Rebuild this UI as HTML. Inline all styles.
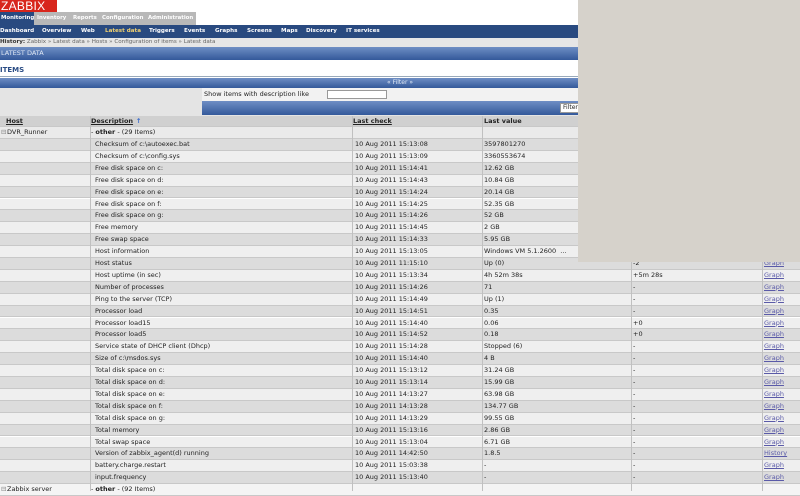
<!DOCTYPE html>
<html><head><meta charset="utf-8"><style>
*{margin:0;padding:0;box-sizing:border-box}
body{width:800px;height:491px;overflow:hidden;background:#fff;font-family:"DejaVu Sans","Liberation Sans",sans-serif;font-size:6.5px;color:#222;position:relative}
.a{position:absolute}
.logo{left:0;top:0;width:57px;height:12px;background:#d8261c;color:#fff;font-family:"Liberation Sans",sans-serif;font-size:12px;line-height:12px;padding-left:1px;letter-spacing:.3px}
.mm{left:0;top:12px;width:196px;height:13px;background:#b8b8b8;color:#fff;font-weight:bold;line-height:13px;font-size:5.4px}
.mm span{position:absolute;top:0}
.sub{left:0;top:25px;width:800px;height:13px;background:#294a80;color:#fff;font-weight:bold;line-height:13px;font-size:5.6px}
.sub span{position:absolute;top:0}
.hist{left:0;top:38px;width:800px;height:9px;background:#e6e6e6;line-height:9px;color:#666;font-size:5.6px}
.bar{background:linear-gradient(#6e8ec4,#34599a);color:#dfe8f5}
.row{position:absolute;left:0;width:800px;height:11.9px;line-height:11.9px;border-bottom:1px solid #c8c8c8}
.row span{position:absolute;top:0}
.d{background:#dcdcdc}.l{background:#efefef}
.c1{left:95px}.c2{left:355px}.c3{left:484px}.c4{left:633px}.c5{left:764px;color:#5a5aa8;text-decoration:underline}
.vl{position:absolute;top:116px;height:375px;width:1px;background:#c0c0c0}
</style></head><body>
<div class="a logo">ZABBIX</div>
<div class="a mm"><span style="left:0;width:34px;height:13px;background:#294a80;padding-left:1px">Monitoring</span><span style="left:37px">Inventory</span><span style="left:73px">Reports</span><span style="left:102px">Configuration</span><span style="left:148px">Administration</span></div>
<div class="a sub"><span style="left:0">Dashboard</span><span style="left:42px">Overview</span><span style="left:81px">Web</span><span style="left:105px;color:#f0d070">Latest data</span><span style="left:149px">Triggers</span><span style="left:184px">Events</span><span style="left:215px">Graphs</span><span style="left:247px">Screens</span><span style="left:281px">Maps</span><span style="left:306px">Discovery</span><span style="left:346px">IT services</span></div>
<div class="a hist"><b style="color:#333">History:</b> Zabbix » Latest data » Hosts » Configuration of items » Latest data</div>
<div class="a bar" style="left:0;top:47px;width:800px;height:13px;line-height:13px;padding-left:1px">LATEST DATA</div>
<div class="a" style="left:0;top:60px;width:800px;height:17px;line-height:20px;font-weight:bold;color:#2a4c84;font-size:7px;border-bottom:1px solid #9ab">ITEMS</div>
<div class="a bar" style="left:0;top:78px;width:800px;height:10px;line-height:10px;text-align:center;font-size:6px">« Filter »</div>
<div class="a" style="left:0;top:88px;width:800px;height:28px;background:#e4e4e4"></div>
<div class="a" style="left:202px;top:88px;width:376px;height:13px;background:#f2f2f2;line-height:13px;padding-left:2px">Show items with description like</div>
<div class="a" style="left:327px;top:90px;width:60px;height:9px;background:#fff;border:1px solid #999"></div>
<div class="a bar" style="left:202px;top:101px;width:376px;height:14px"></div>
<div class="a" style="left:560px;top:103px;width:22px;height:10px;background:#fff;border:1px solid #999;line-height:8px;font-size:6px;padding-left:2px">Filter</div>
<div class="row" style="top:116px;background:#d0d0d0;font-weight:bold;height:11px;line-height:11px"><span style="left:6px;text-decoration:underline">Host</span><span class="c1" style="left:91px;text-decoration:underline">Description</span><span style="left:136px;color:#36c">↑</span><span class="c2" style="left:353px;text-decoration:underline">Last check</span><span class="c3">Last value</span></div>
<div class="row" style="top:127px;background:#eaeaea"><span style="left:1px;color:#888">⊟</span><span style="left:7px">DVR_Runner</span><span style="left:91px">- <b>other</b> - (29 Items)</span></div>
<div class="row d" style="top:139px"><span class="c1">Checksum of c:\autoexec.bat</span><span class="c2">10 Aug 2011 15:13:08</span><span class="c3">3597801270</span></div>
<div class="row l" style="top:150.9px"><span class="c1">Checksum of c:\config.sys</span><span class="c2">10 Aug 2011 15:13:09</span><span class="c3">3360553674</span></div>
<div class="row d" style="top:162.8px"><span class="c1">Free disk space on c:</span><span class="c2">10 Aug 2011 15:14:41</span><span class="c3">12.62 GB</span></div>
<div class="row l" style="top:174.7px"><span class="c1">Free disk space on d:</span><span class="c2">10 Aug 2011 15:14:43</span><span class="c3">10.84 GB</span></div>
<div class="row d" style="top:186.6px"><span class="c1">Free disk space on e:</span><span class="c2">10 Aug 2011 15:14:24</span><span class="c3">20.14 GB</span></div>
<div class="row l" style="top:198.5px"><span class="c1">Free disk space on f:</span><span class="c2">10 Aug 2011 15:14:25</span><span class="c3">52.35 GB</span></div>
<div class="row d" style="top:210.4px"><span class="c1">Free disk space on g:</span><span class="c2">10 Aug 2011 15:14:26</span><span class="c3">52 GB</span></div>
<div class="row l" style="top:222.3px"><span class="c1">Free memory</span><span class="c2">10 Aug 2011 15:14:45</span><span class="c3">2 GB</span></div>
<div class="row d" style="top:234.2px"><span class="c1">Free swap space</span><span class="c2">10 Aug 2011 15:14:33</span><span class="c3">5.95 GB</span></div>
<div class="row l" style="top:246.1px"><span class="c1">Host information</span><span class="c2">10 Aug 2011 15:13:05</span><span class="c3">Windows VM 5.1.2600 &nbsp;...</span></div>
<div class="row d" style="top:258px"><span class="c1">Host status</span><span class="c2">10 Aug 2011 11:15:10</span><span class="c3">Up (0)</span><span class="c4">-2</span><span class="c5">Graph</span></div>
<div class="row l" style="top:269.9px"><span class="c1">Host uptime (in sec)</span><span class="c2">10 Aug 2011 15:13:34</span><span class="c3">4h 52m 38s</span><span class="c4">+5m 28s</span><span class="c5">Graph</span></div>
<div class="row d" style="top:281.8px"><span class="c1">Number of processes</span><span class="c2">10 Aug 2011 15:14:26</span><span class="c3">71</span><span class="c4">-</span><span class="c5">Graph</span></div>
<div class="row l" style="top:293.7px"><span class="c1">Ping to the server (TCP)</span><span class="c2">10 Aug 2011 15:14:49</span><span class="c3">Up (1)</span><span class="c4">-</span><span class="c5">Graph</span></div>
<div class="row d" style="top:305.6px"><span class="c1">Processor load</span><span class="c2">10 Aug 2011 15:14:51</span><span class="c3">0.35</span><span class="c4">-</span><span class="c5">Graph</span></div>
<div class="row l" style="top:317.5px"><span class="c1">Processor load15</span><span class="c2">10 Aug 2011 15:14:40</span><span class="c3">0.06</span><span class="c4">+0</span><span class="c5">Graph</span></div>
<div class="row d" style="top:329.4px"><span class="c1">Processor load5</span><span class="c2">10 Aug 2011 15:14:52</span><span class="c3">0.18</span><span class="c4">+0</span><span class="c5">Graph</span></div>
<div class="row l" style="top:341.3px"><span class="c1">Service state of DHCP client (Dhcp)</span><span class="c2">10 Aug 2011 15:14:28</span><span class="c3">Stopped (6)</span><span class="c4">-</span><span class="c5">Graph</span></div>
<div class="row d" style="top:353.2px"><span class="c1">Size of c:\msdos.sys</span><span class="c2">10 Aug 2011 15:14:40</span><span class="c3">4 B</span><span class="c4">-</span><span class="c5">Graph</span></div>
<div class="row l" style="top:365.1px"><span class="c1">Total disk space on c:</span><span class="c2">10 Aug 2011 15:13:12</span><span class="c3">31.24 GB</span><span class="c4">-</span><span class="c5">Graph</span></div>
<div class="row d" style="top:377px"><span class="c1">Total disk space on d:</span><span class="c2">10 Aug 2011 15:13:14</span><span class="c3">15.99 GB</span><span class="c4">-</span><span class="c5">Graph</span></div>
<div class="row l" style="top:388.9px"><span class="c1">Total disk space on e:</span><span class="c2">10 Aug 2011 14:13:27</span><span class="c3">63.98 GB</span><span class="c4">-</span><span class="c5">Graph</span></div>
<div class="row d" style="top:400.8px"><span class="c1">Total disk space on f:</span><span class="c2">10 Aug 2011 14:13:28</span><span class="c3">134.77 GB</span><span class="c4">-</span><span class="c5">Graph</span></div>
<div class="row l" style="top:412.7px"><span class="c1">Total disk space on g:</span><span class="c2">10 Aug 2011 14:13:29</span><span class="c3">99.55 GB</span><span class="c4">-</span><span class="c5">Graph</span></div>
<div class="row d" style="top:424.6px"><span class="c1">Total memory</span><span class="c2">10 Aug 2011 15:13:16</span><span class="c3">2.86 GB</span><span class="c4">-</span><span class="c5">Graph</span></div>
<div class="row l" style="top:436.5px"><span class="c1">Total swap space</span><span class="c2">10 Aug 2011 15:13:04</span><span class="c3">6.71 GB</span><span class="c4">-</span><span class="c5">Graph</span></div>
<div class="row d" style="top:448.4px"><span class="c1">Version of zabbix_agent(d) running</span><span class="c2">10 Aug 2011 14:42:50</span><span class="c3">1.8.5</span><span class="c4">-</span><span class="c5">History</span></div>
<div class="row l" style="top:460.3px"><span class="c1">battery.charge.restart</span><span class="c2">10 Aug 2011 15:03:38</span><span class="c3">-</span><span class="c4">-</span><span class="c5">Graph</span></div>
<div class="row d" style="top:472.2px"><span class="c1">input.frequency</span><span class="c2">10 Aug 2011 15:13:40</span><span class="c3">-</span><span class="c4">-</span><span class="c5">Graph</span></div>
<div class="row" style="top:484.1px;background:#f4f4f4"><span style="left:1px;color:#888">⊟</span><span style="left:7px">Zabbix server</span><span style="left:91px">- <b>other</b> - (92 Items)</span></div>
<div class="vl" style="left:90px"></div><div class="vl" style="left:352px"></div><div class="vl" style="left:482px"></div><div class="vl" style="left:631px"></div><div class="vl" style="left:762px"></div>
<div class="a" style="left:578px;top:0;width:222px;height:262px;background:#d6d2cb"></div>
</body></html>
